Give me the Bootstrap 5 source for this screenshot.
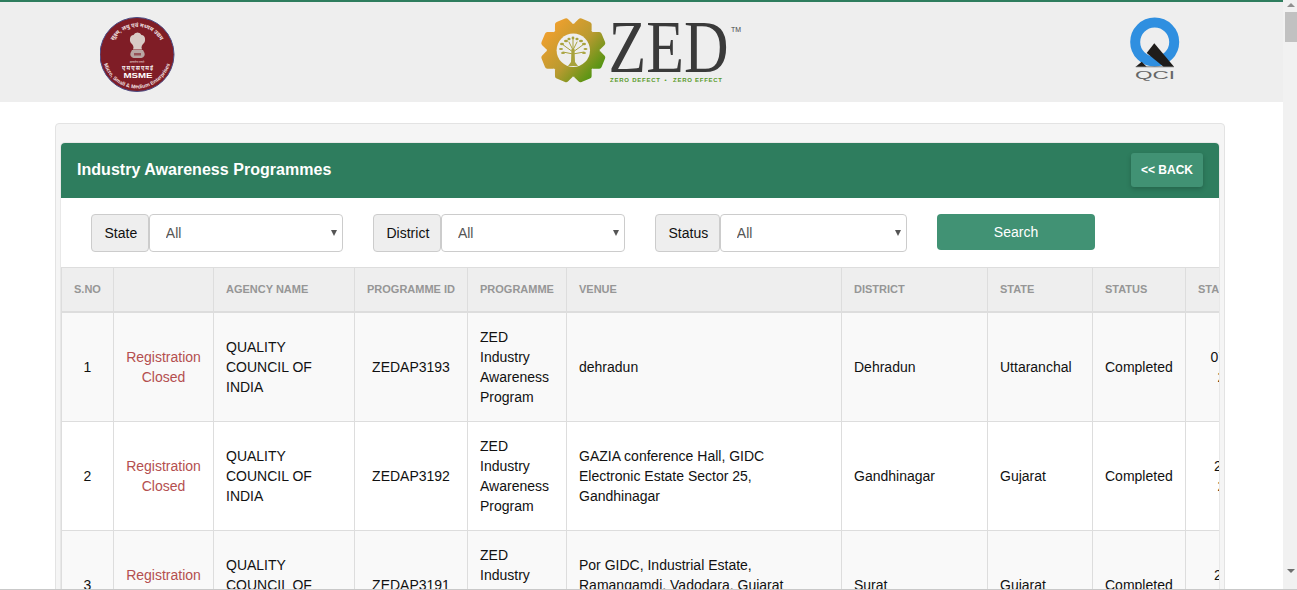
<!DOCTYPE html>
<html lang="en">
<head>
<meta charset="utf-8">
<title>Industry Awareness Programmes</title>
<link href="https://cdn.jsdelivr.net/npm/bootstrap@5.3.0/dist/css/bootstrap.min.css" rel="stylesheet">
<style>
html,body{height:100%;overflow:hidden;background:#fff;}
body{font-family:"Liberation Sans",Arial,sans-serif;font-size:14px;line-height:20px;color:#111;}
.page-frame{height:590px;overflow:hidden;}
.page-main{width:1283px;flex:none;overflow:hidden;}
.top-band{height:102px;background:#eee;border-top:2px solid #2e7d5e;padding:0 103px 0 100px;}
.top-band svg{display:block;flex:none;}
.fake-scroll{width:14px;flex:none;background:#f1f1f1;}
.fake-thumb{height:30px;width:12px;margin-left:2px;background:#c1c1c1;}
.arrow-up,.arrow-down{width:0;height:0;margin:0 auto;border-left:4px solid transparent;border-right:4px solid transparent;position:relative;left:1px;}
.arrow-up{border-bottom:4px solid #8f8f8f;margin-top:3px;margin-bottom:5px;}
.arrow-down{border-top:4px solid #6f6f6f;margin-top:527px;}
.edge-line{height:1px;background:#c9c9c9;}
.outer-well{width:1170px;margin:21px 0 0 55px;padding:19px 5px 5px;background:#f5f5f5;border:1px solid #e3e3e3;border-radius:4px;}
.inner-panel{background:#fff;border-radius:4px 4px 0 0;box-shadow:0 0 0 1px #e8e8e8;overflow:hidden;}
.panel-head{height:55px;background:#2e7d5e;padding:0 16px 2px;color:#fff;}
.panel-title{font-size:16px;font-weight:700;line-height:20px;margin:0;letter-spacing:.03px;}
.back-btn{height:34px;width:72px;padding:0;background:#419274;border:0;border-radius:3px;color:#fff;font-size:12px;font-weight:700;box-shadow:0 2px 5px rgba(0,0,0,.2);}
.back-btn:hover{background:#419274;color:#fff;}
.filter-bar{height:69px;padding:16px 0 0 30px;gap:30px;}
.filter-group{width:252px;height:38px;}
.filter-label{height:38px;padding:0 10.6px 0 12.5px;background:#eee;border:1px solid #ccc;border-radius:4px;font-size:14px;color:#111;white-space:nowrap;}
.filter-select{height:38px;min-width:0;flex:1 1 auto;padding:0 20px 0 16px;background-color:#fff;background-image:url("data:image/svg+xml,%3Csvg xmlns='http://www.w3.org/2000/svg' viewBox='0 0 6 6'%3E%3Cpath d='M0 0H6L3 6Z' fill='%23555'/%3E%3C/svg%3E");background-position:right 5px center;background-size:6px 6px;background-repeat:no-repeat;border:1px solid #ccc;border-radius:4px;font-size:14px;color:#555;}
.search-btn{width:158px;height:36px;padding:0;background:#419274;border:0;border-radius:4px;color:#fff;font-size:14px;}
.search-btn:hover{background:#419274;color:#fff;}
.table-clip{overflow:hidden;}
.data-grid{table-layout:fixed;width:1219px;margin:0;border-collapse:collapse;--bs-table-striped-bg:#f9f9f9;--bs-table-border-color:#ddd;--bs-table-color:#111;--bs-table-striped-color:#111;}
.data-grid > :not(caption) > * > *{padding:14px 12px;vertical-align:middle;font-size:14px;line-height:20px;border-color:#ddd;}
.data-grid > thead > tr > th{height:44px;padding:0 12px;background:#eee;color:#969696;font-size:11px;font-weight:700;text-transform:uppercase;white-space:nowrap;border-bottom:2px solid #ddd;}
.data-grid tbody{border-top:0!important;}
.data-grid > tbody > tr > td.closed-tag{color:#b44f4f;}
.w-sno{width:52px}.w-reg{width:100px}.w-agency{width:141px}.w-pid{width:113px}.w-prog{width:99px}.w-venue{width:275px}.w-dist{width:146px}.w-state{width:105px}.w-status{width:93px}.w-date{width:95px}
</style>
</head>
<body>
<div class="page-frame d-flex">
  <div class="page-main">
    <header class="top-band d-flex justify-content-between align-items-start">
      <svg width="75" height="100" viewBox="100 2 75 100" role="img" aria-label="MSME">
        <circle cx="137" cy="54.5" r="37" fill="#7f1d26" stroke="#4b4d86" stroke-width="1"/>
        <defs>
          <path id="arcTop" d="M112.5 42.6 A27 27 0 0 1 161.5 42.6"/>
          <path id="arcBot" d="M103.7 62.9 A34.5 34.5 0 0 0 170.3 62.9"/>
        </defs>
        <text font-family="'Noto Sans','DejaVu Sans',sans-serif" font-size="5.6" fill="#f1e2e2" font-weight="700" text-anchor="middle"><textPath href="#arcTop" startOffset="50%">सूक्ष्म, लघु एवं मध्यम उद्यम</textPath></text>
        <text font-family="'Liberation Sans',sans-serif" font-size="5.2" font-weight="700" fill="#f1e2e2" text-anchor="middle"><textPath href="#arcBot" startOffset="50%">Micro, Small &amp; Medium Enterprises</textPath></text>
        <path d="M137.5 32.5 q3 0 4 2.5 q3 0 3.5 3.5 q.5 3.5 -2 5.5 q-1.5 1.5 -1.5 3.5 l.5 2 h-9 l.5 -2 q0 -2 -1.5 -3.5 q-2.5 -2 -2 -5.5 q.5 -3.5 3.5 -3.5 q1 -2.5 4 -2.5z" fill="#d9cbc6"/>
        <path d="M132 50 h11 l1.5 3 q1 3.5 -3 5 h-8 q-4 -1.5 -3 -5z" fill="#b9a6a3"/>
        <path d="M134 53 h7 v2.5 h-7z" fill="#7f1d26" opacity=".6"/>
        <text x="137" y="62.5" font-family="'Noto Sans',sans-serif" font-size="3" fill="#eadada" text-anchor="middle">सत्यमेव जयते</text>
        <text x="137.5" y="69.5" font-family="'Noto Sans',sans-serif" font-size="5.6" font-weight="700" fill="#f5eeee" text-anchor="middle" textLength="31">एमएसएमई</text>
        <text x="138" y="78.3" font-family="'Liberation Sans',sans-serif" font-size="7" font-weight="700" fill="#fff" text-anchor="middle" textLength="29" lengthAdjust="spacingAndGlyphs">MSME</text>
      </svg>
      <svg width="225" height="100" viewBox="540 2 225 100" role="img" aria-label="ZED">
        <defs>
          <linearGradient id="gearFill" gradientUnits="userSpaceOnUse" x1="546" y1="28" x2="598" y2="74">
            <stop offset="0" stop-color="#f2a02e"/><stop offset=".55" stop-color="#b89a30"/><stop offset="1" stop-color="#4c9410"/>
          </linearGradient>
          <path id="gearTooth" d="M-9.5 -25 L-7 -31 Q-6.3 -32.5 -4.5 -32.5 H4.5 Q6.3 -32.5 7 -31 L9.5 -25Z"/>
          <clipPath id="gearClip">
            <circle cx="573.3" cy="50.3" r="26.5"/>
            <use href="#gearTooth" transform="translate(573.3 50.3) rotate(22.5)"/>
            <use href="#gearTooth" transform="translate(573.3 50.3) rotate(67.5)"/>
            <use href="#gearTooth" transform="translate(573.3 50.3) rotate(112.5)"/>
            <use href="#gearTooth" transform="translate(573.3 50.3) rotate(157.5)"/>
            <use href="#gearTooth" transform="translate(573.3 50.3) rotate(202.5)"/>
            <use href="#gearTooth" transform="translate(573.3 50.3) rotate(247.5)"/>
            <use href="#gearTooth" transform="translate(573.3 50.3) rotate(292.5)"/>
            <use href="#gearTooth" transform="translate(573.3 50.3) rotate(337.5)"/>
          </clipPath>
        </defs>
        <rect x="538" y="14" width="72" height="72" fill="url(#gearFill)" clip-path="url(#gearClip)"/>
        <circle cx="573.3" cy="50.3" r="16.7" fill="#eee"/>
        <g fill="none" stroke="#a8a23c" stroke-width="1" stroke-linecap="round">
          <path d="M573 52 L566 47 L562 44 M573 52 L580 47 L584 44 M573 50 L569 42 M573 50 L577 42 M573 50 L573 38 M573 54 L563 52 M573 54 L584 52"/>
        </g>
        <g fill="#a8a23c">
          <path d="M571.5 49 H574.5 L575 62 L578 66 H568 L571 62Z"/>
          <ellipse cx="562" cy="44" rx="2" ry="1.2"/><ellipse cx="566" cy="41" rx="2" ry="1.2"/><ellipse cx="569" cy="39" rx="1.6" ry="1.2"/>
          <ellipse cx="573" cy="38" rx="1.4" ry="1.4"/><ellipse cx="577" cy="39" rx="1.6" ry="1.2"/><ellipse cx="581" cy="41" rx="2" ry="1.2"/>
          <ellipse cx="584" cy="44" rx="2" ry="1.2"/><ellipse cx="561" cy="49" rx="2" ry="1.1"/><ellipse cx="585.5" cy="49" rx="2" ry="1.1"/>
          <ellipse cx="563" cy="53" rx="2" ry="1.1"/><ellipse cx="584" cy="53" rx="2" ry="1.1"/>
        </g>
        <text x="608.5" y="72" font-family="'Liberation Serif',serif" font-size="73" fill="#3a3a3a" textLength="120" lengthAdjust="spacingAndGlyphs">ZED</text>
        <text x="731" y="32" font-family="'Liberation Sans',sans-serif" font-size="6.5" fill="#444" textLength="10" lengthAdjust="spacingAndGlyphs">TM</text>
        <g font-family="'Liberation Sans',sans-serif" font-size="6" font-weight="700" fill="#5a9a2a">
          <text x="610" y="82" textLength="50" lengthAdjust="spacing">ZERO DEFECT</text>
          <text x="664.5" y="82">•</text>
          <text x="673" y="82" textLength="49" lengthAdjust="spacing">ZERO EFFECT</text>
        </g>
      </svg>
      <svg width="50" height="100" viewBox="1130 2 50 100" role="img" aria-label="QCI">
        <circle cx="1154.7" cy="42" r="19.5" fill="none" stroke="#2f8fe0" stroke-width="10"/>
        <path d="M1154.3 43.3 L1174 66.7 L1163.5 66.7 L1146.7 53Z" fill="#1f1c1a"/>
        <path d="M1135.7 66.7 L1141.7 61.7 L1146.7 66.7Z" fill="#1f1c1a"/>
        <rect x="1135.7" y="66.5" width="38.3" height=".7" fill="#555"/>
        <text x="1135" y="79" font-family="'Liberation Sans',sans-serif" font-size="11" fill="#666" textLength="40" lengthAdjust="spacingAndGlyphs">QCI</text>
      </svg>
    </header>

    <div class="outer-well">
      <section class="inner-panel">
        <div class="panel-head d-flex justify-content-between align-items-center">
          <h1 class="panel-title">Industry Awareness Programmes</h1>
          <button type="button" class="btn back-btn">&lt;&lt; BACK</button>
        </div>
        <form class="filter-bar d-flex align-items-start">
          <div class="filter-group d-flex">
            <span class="filter-label d-flex align-items-center">State</span>
            <select class="form-select filter-select" aria-label="State"><option>All</option></select>
          </div>
          <div class="filter-group d-flex">
            <span class="filter-label d-flex align-items-center">District</span>
            <select class="form-select filter-select" aria-label="District"><option>All</option></select>
          </div>
          <div class="filter-group d-flex">
            <span class="filter-label d-flex align-items-center">Status</span>
            <select class="form-select filter-select" aria-label="Status"><option>All</option></select>
          </div>
          <button type="button" class="btn search-btn">Search</button>
        </form>
        <div class="table-clip">
          <table class="table table-bordered table-striped data-grid">
            <colgroup>
              <col class="w-sno"><col class="w-reg"><col class="w-agency"><col class="w-pid"><col class="w-prog"><col class="w-venue"><col class="w-dist"><col class="w-state"><col class="w-status"><col class="w-date">
            </colgroup>
            <thead>
              <tr><th>S.No</th><th></th><th>Agency Name</th><th>Programme ID</th><th>Programme</th><th>Venue</th><th>District</th><th>State</th><th>Status</th><th>Start Date</th></tr>
            </thead>
            <tbody>
              <tr>
                <td class="text-center">1</td>
                <td class="text-center closed-tag">Registration Closed</td>
                <td>QUALITY COUNCIL OF INDIA</td>
                <td class="text-center">ZEDAP3193</td>
                <td>ZED Industry Awareness Program</td>
                <td>dehradun</td>
                <td>Dehradun</td>
                <td>Uttaranchal</td>
                <td>Completed</td>
                <td class="text-center">07-Nov 2018</td>
              </tr>
              <tr>
                <td class="text-center">2</td>
                <td class="text-center closed-tag">Registration Closed</td>
                <td>QUALITY COUNCIL OF INDIA</td>
                <td class="text-center">ZEDAP3192</td>
                <td>ZED Industry Awareness Program</td>
                <td>GAZIA conference Hall, GIDC Electronic Estate Sector 25, Gandhinagar</td>
                <td>Gandhinagar</td>
                <td>Gujarat</td>
                <td>Completed</td>
                <td class="text-center">21-Jul 2018</td>
              </tr>
              <tr>
                <td class="text-center">3</td>
                <td class="text-center closed-tag">Registration Closed</td>
                <td>QUALITY COUNCIL OF INDIA</td>
                <td class="text-center">ZEDAP3191</td>
                <td>ZED Industry Awareness Program</td>
                <td>Por GIDC, Industrial Estate, Ramangamdi, Vadodara, Gujarat 391243</td>
                <td>Surat</td>
                <td>Gujarat</td>
                <td>Completed</td>
                <td class="text-center">21-Jul 2018</td>
              </tr>
            </tbody>
          </table>
        </div>
      </section>
    </div>
  </div>
  <div class="fake-scroll" aria-hidden="true">
    <div class="arrow-up"></div>
    <div class="fake-thumb"></div>
    <div class="arrow-down"></div>
  </div>
</div>
<div class="edge-line fixed-bottom"></div>
<script src="https://cdn.jsdelivr.net/npm/bootstrap@5.3.0/dist/js/bootstrap.bundle.min.js"></script>
</body>
</html>
